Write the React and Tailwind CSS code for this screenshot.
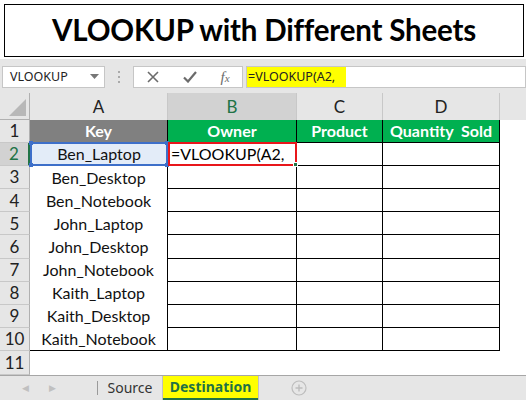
import React from 'react';

const cellFont = { fontFamily: 'Lato, "Open Sans", sans-serif' };

const keys = [
  'Ben_Laptop',
  'Ben_Desktop',
  'Ben_Notebook',
  'John_Laptop',
  'John_Desktop',
  'John_Notebook',
  'Kaith_Laptop',
  'Kaith_Desktop',
  'Kaith_Notebook',
];

function ColHeader({ label, active, last }) {
  return (
    <div
      className={
        'flex items-center justify-center border-r border-[#c8c8c8] text-[17px] ' +
        (active ? 'bg-[#d2d2d2] text-[#217346]' : 'bg-[#e6e6e6] text-[#222]') +
        (last ? ' border-r-0' : '')
      }
    >
      {label}
    </div>
  );
}

function RowHeader({ n, active }) {
  return (
    <div
      className={
        'flex items-center justify-center border-b border-[#c8c8c8] text-[17px] ' +
        (active
          ? 'bg-[#d2d2d2] text-[#217346] border-r-2 border-r-[#217346]'
          : 'bg-[#e6e6e6] text-[#222] border-r border-r-[#b0b0b0]')
      }
    >
      {n}
    </div>
  );
}

export default function App() {
  return (
    <div className="w-[532px] h-[402px] bg-white overflow-hidden" style={cellFont}>
      {/* titulo */}
      <div className="pt-[4px] pl-[4px] pr-[8px] pb-[2px]">
        <div className="h-[53px] border-[1.5px] border-black flex items-center justify-center">
          <span className="font-bold text-[29.5px] text-black tracking-[-0.2px]">
            VLOOKUP with Different Sheets
          </span>
        </div>
      </div>

      <div className="w-[526px] bg-[#e6e6e6]">
        {/* barra de formulas */}
        <div className="h-[34px] pt-[7px] pb-[5px] flex items-stretch" style={{ fontFamily: '"Noto Sans", sans-serif' }}>
          <div className="ml-[2px] w-[103px] bg-white border border-[#c6c6c6] flex items-center justify-between pl-[7px] pr-[5px]">
            <span className="text-[12.5px] text-[#222]">VLOOKUP</span>
            <svg width="9" height="6" viewBox="0 0 9 6"><path d="M0 0h9L4.5 5z" fill="#777" /></svg>
          </div>
          <div className="w-[28px] flex flex-col items-center justify-center gap-[3px]">
            <span className="w-[2px] h-[2px] bg-[#aaa]" />
            <span className="w-[2px] h-[2px] bg-[#aaa]" />
            <span className="w-[2px] h-[2px] bg-[#aaa]" />
          </div>
          <div className="w-[110px] bg-white border border-[#c6c6c6] flex items-center">
            <div className="w-[37px] flex justify-center">
              <svg width="12" height="12" viewBox="0 0 12 12"><path d="M1 1l10 10M11 1L1 11" stroke="#6b6b6b" strokeWidth="1.6" /></svg>
            </div>
            <div className="w-[37px] flex justify-center">
              <svg width="14" height="12" viewBox="0 0 14 12"><path d="M1 6.5l4 4L13 1" stroke="#6b6b6b" strokeWidth="2.2" fill="none" /></svg>
            </div>
            <div className="w-[34px] flex justify-center">
              <span className="italic text-[15px] text-[#6b6b6b]" style={{ fontFamily: '"Liberation Serif", serif' }}>
                f<span className="text-[11px]">x</span>
              </span>
            </div>
          </div>
          <div className="ml-[3px] flex-1 bg-white border border-[#c6c6c6] flex">
            <div className="w-[99px] bg-[#ffff00] flex items-center pl-[1px]">
              <span className="text-[12.5px] text-[#222]">=VLOOKUP(A2,</span>
            </div>
          </div>
        </div>

        {/* cuadricula */}
        <div className="grid grid-cols-[30px_138px_129px_86px_117px_26px] grid-rows-[27px_repeat(10,23.1px)_24px] bg-white">
          <div className="bg-[#e6e6e6] border-r border-b border-[#b0b0b0] flex items-end justify-end p-[3px]">
            <svg width="17" height="17" viewBox="0 0 17 17"><path d="M17 0V17H0z" fill="#b8b8b8" /></svg>
          </div>
          <ColHeader label="A" />
          <ColHeader label="B" active />
          <ColHeader label="C" />
          <ColHeader label="D" />
          <div className="bg-[#e6e6e6]" />

          {/* fila 1 */}
          <RowHeader n={1} />
          <div className="bg-[#808080] text-white font-bold text-[16px] flex items-center justify-center border-r border-b border-black">Key</div>
          <div className="bg-[#00b050] text-white font-bold text-[16px] flex items-center justify-center border-r border-b border-black">Owner</div>
          <div className="bg-[#00b050] text-white font-bold text-[16px] flex items-center justify-center border-r border-b border-black">Product</div>
          <div className="bg-[#00b050] text-white font-bold text-[16px] flex items-center justify-center border-r border-b border-black whitespace-pre">Quantity  Sold</div>
          <div />

          {keys.map((k, i) => {
            const row = i + 2;
            const first = i === 0;
            return (
              <React.Fragment key={k}>
                <RowHeader n={row} active={first} />
                {first ? (
                  <div className="relative bg-[#e3ecf8] border-2 border-[#3d6fc9] text-[16px] text-[#111] flex items-center justify-center -mt-px">
                    {k}
                    <span className="absolute -left-[3px] -top-[3px] w-[4px] h-[4px] bg-[#3d6fc9]" />
                    <span className="absolute -right-[3px] -top-[3px] w-[4px] h-[4px] bg-[#3d6fc9]" />
                    <span className="absolute -left-[3px] -bottom-[3px] w-[4px] h-[4px] bg-[#3d6fc9]" />
                    <span className="absolute -right-[3px] -bottom-[3px] w-[4px] h-[4px] bg-[#3d6fc9]" />
                  </div>
                ) : (
                  <div className={'text-[16px] text-[#111] flex items-center justify-center border-r border-black' + (row === 10 ? ' border-b' : '')}>
                    {k}
                  </div>
                )}
                {first ? (
                  <div className="relative border-2 border-[#e8161b] text-[16px] text-black flex items-center pl-[1px] -mt-px">
                    =VLOOKUP(A2,
                    <span className="absolute -right-[3px] -bottom-[3px] w-[5px] h-[5px] bg-[#217346] border border-white" />
                  </div>
                ) : (
                  <div className="border-r border-b border-black" />
                )}
                <div className="border-r border-b border-black" />
                <div className="border-r border-b border-black" />
                <div />
              </React.Fragment>
            );
          })}

          <RowHeader n={11} />
          <div className="col-span-5" />
        </div>

        {/* pestañas */}
        <div className="h-[25px] border-t border-[#a6a6a6] flex items-stretch" style={{ fontFamily: '"Noto Sans", sans-serif' }}>
          <div className="w-[97px] flex items-center">
            <span className="ml-[22px] text-[9px] text-[#c0c0c0]">◀</span>
            <span className="ml-[20px] text-[9px] text-[#c0c0c0]">▶</span>
          </div>
          <div className="my-[5px] w-px bg-[#9a9a9a]" />
          <div className="w-[64px] flex items-center justify-center text-[14px] text-[#333]">Source</div>
          <div className="w-px bg-[#c0c0c0]" />
          <div className="w-[95px] bg-[#ffff00] border-b-2 border-[#217346] flex items-center justify-center text-[14px] font-bold text-[#1e7145]">
            Destination
          </div>
          <div className="w-px bg-[#c0c0c0]" />
          <div className="flex-1 flex items-center pl-[32px]">
            <svg width="16" height="16" viewBox="0 0 16 16">
              <circle cx="8" cy="8" r="7" fill="none" stroke="#bdbdbd" strokeWidth="1.2" />
              <path d="M8 4.5v7M4.5 8h7" stroke="#bdbdbd" strokeWidth="1.4" />
            </svg>
          </div>
        </div>
      </div>
    </div>
  );
}
